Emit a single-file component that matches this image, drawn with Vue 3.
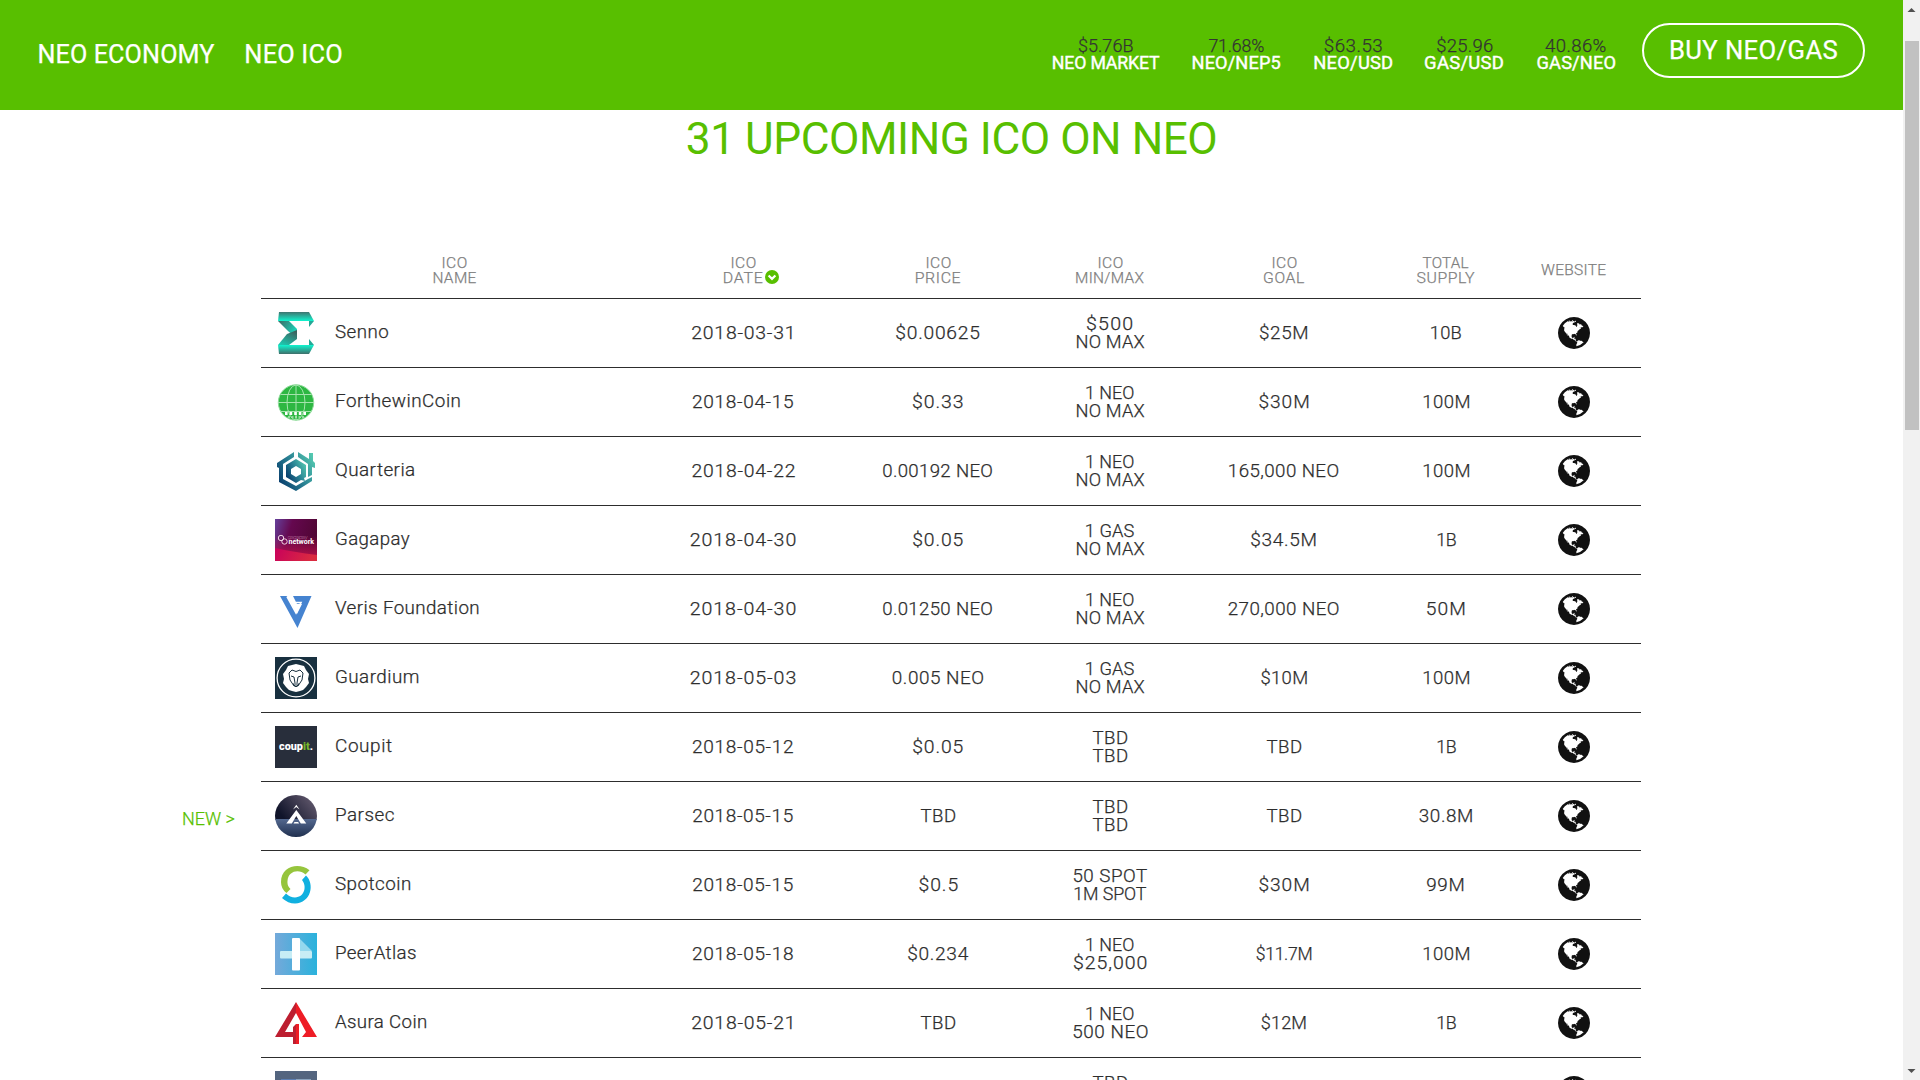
<script setup>
const stats = [
  { value: '$5.76B', vw: 54.5, label: 'NEO MARKET', lw: 107 },
  { value: '71.68%', vw: 55.5, label: 'NEO/NEP5', lw: 88 },
  { value: '$63.53', vw: 57, label: 'NEO/USD', lw: 78 },
  { value: '$25.96', vw: 56, label: 'GAS/USD', lw: 78 },
  { value: '40.86%', vw: 61, label: 'GAS/NEO', lw: 78 },
]

const headers = [
  [['ICO', 24.5], ['NAME', 42.4]],
  [['ICO', 24.5], ['DATE', 38.4]],
  [['ICO', 24.5], ['PRICE', 44.3]],
  [['ICO', 24.5], ['MIN/MAX', 67.6]],
  [['ICO', 24.5], ['GOAL', 40.3]],
  [['TOTAL', 46], ['SUPPLY', 58]],
  [['WEBSITE', 64.5]],
]

const noMax = ['NO MAX', 68]
const oneNeo = ['1 NEO', 48]
const oneGas = ['1 GAS', 48]
const tbd = ['TBD', 35]

const rows = [
  { logo: 'senno', name: ['Senno', 53.7], cells: [[['2018-03-31', 101]], [['$0.00625', 83.5]], [['$500', 45], noMax], [['$25M', 47]], [['10B', 31]]] },
  { logo: 'ftw', name: ['ForthewinCoin', 124], cells: [[['2018-04-15', 101.5]], [['$0.33', 49.5]], [oneNeo, noMax], [['$30M', 48.5]], [['100M', 45.5]]] },
  { logo: 'quarteria', name: ['Quarteria', 78.5], cells: [[['2018-04-22', 104]], [['0.00192 NEO', 109.5]], [oneNeo, noMax], [['165,000 NEO', 110]], [['100M', 45.5]]] },
  { logo: 'gagapay', name: ['Gagapay', 74], cells: [[['2018-04-30', 105.5]], [['$0.05', 50]], [oneGas, noMax], [['$34.5M', 64]], [['1B', 19.5]]] },
  { logo: 'veris', name: ['Veris Foundation', 143.7], cells: [[['2018-04-30', 105.5]], [['0.01250 NEO', 109.5]], [oneNeo, noMax], [['270,000 NEO', 111.5]], [['50M', 37.5]]] },
  { logo: 'guardium', name: ['Guardium', 82.3], cells: [[['2018-05-03', 105.5]], [['0.005 NEO', 91]], [oneGas, noMax], [['$10M', 45]], [['100M', 45.5]]] },
  { logo: 'coupit', name: ['Coupit', 56.3], cells: [[['2018-05-12', 101.5]], [['$0.05', 50]], [tbd, tbd], [tbd], [['1B', 19.5]]] },
  { logo: 'parsec', isNew: true, name: ['Parsec', 58], cells: [[['2018-05-15', 101]], [tbd], [tbd, tbd], [tbd], [['30.8M', 53]]] },
  { logo: 'spotcoin', name: ['Spotcoin', 75.3], cells: [[['2018-05-15', 101]], [['$0.5', 38.5]], [['50 SPOT', 74], ['1M SPOT', 72.5]], [['$30M', 48.5]], [['99M', 37]]] },
  { logo: 'peeratlas', name: ['PeerAtlas', 80.3], cells: [[['2018-05-18', 101.5]], [['$0.234', 60]], [oneNeo, ['$25,000', 72]], [['$11.7M', 54.5]], [['100M', 45.5]]] },
  { logo: 'asura', name: ['Asura Coin', 91.3], cells: [[['2018-05-21', 101]], [tbd], [oneNeo, ['500 NEO', 75]], [['$12M', 43.5]], [['1B', 19.5]]] },
  { logo: 'next', name: ['', 0], cells: [[], [], [tbd, tbd], [], []] },
]

// Makes the ink of a label span the given width: half by widening the glyphs, half by tracking.
const ctx = document.createElement('canvas').getContext('2d')
const vFit = {
  mounted(el, { value }) {
    const text = el.textContent.trim()
    if (text.length < 2 || !value) return
    const cs = getComputedStyle(el)
    ctx.font = `${cs.fontWeight} ${cs.fontSize} ${cs.fontFamily}`
    const m = ctx.measureText(text)
    const ink = m.actualBoundingBoxRight + m.actualBoundingBoxLeft
    const scale = Math.sqrt(value / ink)
    const spacing = (value / scale - ink) / (text.length - 1)
    el.style.letterSpacing = `${spacing.toFixed(3)}px`
    el.style.marginRight = `${(-spacing).toFixed(3)}px`
    el.style.transform = `scaleX(${scale.toFixed(4)})`
  },
}

const globe = 'M896 128q209 0 385.5 103t279.5 279.5 103 385.5-103 385.5-279.5 279.5-385.5 103-385.5-103-279.5-279.5-103-385.5 103-385.5 279.5-279.5 385.5-103zm274 521q-2 1-9.5 9.5t-13.5 9.5q2 0 4.5-5t5-11 3.5-7q6-7 22-15 14-6 52-12 34-8 51 11-2-2 9.5-13t14.5-12q3-2 15-4.5t15-7.5l2-22q-12 1-17.5-7t-6.5-21q0 2-6 8 0-7-4.5-8t-11.5 1-9 1q-10-3-15-7.5t-8-16.5-4-15q-2-5-9.5-11t-9.5-10q-1-2-2.5-5.5t-3-6.5-4-5.5-5.5-2.5-7 5-7.5 10-4.5 5q-3-2-6-1.5t-4.5 1-4.5 3-5 3.5q-3 2-8.5 3t-8.5 2q15-5-1-11-10-4-16-3 9-4 7.5-12t-8.5-14h5q-1-4-8.5-8.5t-17.5-8.5-13-6q-8-5-34-9.5t-33-.5q-5 6-4.5 10.5t4 14 3.5 12.5q1 6-5.5 13t-6.5 12q0 7 14 15.5t10 21.5q-3 8-16 16t-16 12q-5 8-1.5 18.5t10.5 16.5q2 2 1.5 4t-3.5 4.5-5.5 4-6.5 3.5l-3 2q-11 5-20.5-6t-13.5-26q-7-25-16-30-23-8-29 1-5-13-41-26-25-9-58-4 6-1 0-15-7-15-19-12 3-6 4-17.5t1-13.5q3-13 12-23 1-1 7-8.5t9.5-13.5.5-6q35 4 50-11 5-5 11.5-17t10.5-17q9-6 14-5.5t14.5 5.5 14.5 5q14 1 15.5-11t-7.5-20q12 1 3-17-5-7-8-9-12-4-27 5-8 4 2 8-1-1-9.5 10.5t-16.5 17.5-16-5q-1-1-5.5-13.5t-9.5-13.5q-8 0-16 15 3-8-11-15t-24-8q19-12-8-27-7-4-20.5-5t-19.5 4q-5 7-5.5 11.5t5 8 10.5 5.5 11.5 4 8.5 3q14 10 8 14-2 1-8.5 3.5t-11.5 4.5-6 4q-3 4 0 14t-2 14q-5-5-9-17.5t-7-16.5q7 9-25 6l-10-1q-4 0-16 2t-20.5 1-13.5-8q-4-8 0-20 1-4 4-2-4-3-11-9.5t-10-8.5q-46 15-94 41 6 1 12-1 5-2 13-6.5t10-5.5q34-14 42-7l5-5q14 16 20 25-7-4-30-1-20 6-22 12 7 12 5 18-4-3-11.5-10t-14.5-11-15-5q-16 0-22 1-146 80-235 222 7 7 12 8 4 1 5 9t2.5 11 11.5-3q9 8 3 19 1-1 44 27 19 17 21 21 3 11-10 18-1-2-9-9t-9-4q-3 5 .5 18.5t10.5 12.5q-7 0-9.5 16t-2.5 35.5-1 23.5l2 1q-3 12 5.5 34.5t21.5 19.5q-13 3 20 43 6 8 8 9 3 2 12 7.5t15 10 10 10.5q4 5 10 22.5t14 23.5q-2 6 9.5 20t10.5 23q-1 0-2.5 1t-2.5 1q3 7 15.5 14t15.5 13q1 3 2 10t3 11 8 2q2-20-24-62-15-25-17-29-3-5-5.5-15.5t-4.5-14.5q2 0 6 1.5t8.5 3.5 7.5 4 2 3q-3 7 2 17.5t12 18.5 17 19 12 13q6 6 14 19.5t0 13.5q9 0 20 10.5t17 19.5q5 8 8 26t5 24q2 7 8.5 13.5t12.5 9.5l16 8 13 7q5 2 18.5 10.5t21.5 11.5q10 4 16 4t14.5-2.5 13.5-3.5q15-2 29 15t21 21q36 19 55 11-2 1 .5 7.5t8 15.5 9 14.5 5.5 8.5q5 6 18 15t18 15q6-4 7-9-3 8 7 20t18 10q14-3 14-32-31 15-49-18 0-1-2.5-5.5t-4-8.5-2.5-8.5 0-7.5 5-3q9 0 10-3.5t-2-12.5-4-13q-1-8-11-20t-12-15q-5 9-16 8t-16-9q0 1-1.5 5.5t-1.5 6.5q-13 0-15-1 1-3 2.5-17.5t3.5-22.5q1-4 5.5-12t7.5-14.5 4-12.5-4.5-9.5-17.5-2.5q-19 1-26 20-1 3-3 10.5t-5 11.5-9 7q-7 3-24 2t-24-5q-13-8-22.5-29t-9.5-37q0-10 2.5-26.5t3-25-5.5-24.5q3-2 9-9.5t10-10.5q2-1 4.5-1.5t4.5 0 4-1.5 3-6q-1-1-4-3-3-3-4-3 7 3 28.5-1.5t27.5 1.5q15 11 22-2 0-1-2.5-9.5t-.5-13.5q5 27 29 9 3 3 15.5 5t17.5 5q3 2 7 5.5t5.5 4.5 5-.5 8.5-6.5q10 14 12 24 11 40 19 44 7 3 11 2t4.5-9.5 0-14-1.5-12.5l-1-8v-18l-1-8q-15-3-18.5-12t1.5-18.5 15-18.5q1-1 8-3.5t15.5-6.5 12.5-8q21-19 15-35 7 0 11-9-1 0-5-3t-7.5-5-4.5-2q9-5 2-16 5-3 7.5-11t7.5-10q9 12 21 2 8-8 1-16 5-7 20.5-10.5t18.5-9.5q7 2 8-2t1-12 3-12q4-5 15-9t13-5l17-11q3-4 0-4 18 2 31-11 10-11-6-20 3-6-3-9.5t-15-5.5q3-1 11.5-.5t10.5-1.5q15-10-7-16-17-5-43 12zm-163 877q206-36 351-189-3-3-12.5-4.5t-12.5-3.5q-18-7-24-8 1-7-2.5-13t-8-9-12.5-8-11-7q-2-2-7-6t-7-5.5-7.5-4.5-8.5-2-10 1l-3 1q-3 1-5.5 2.5t-5.5 3-4 3 0 2.5q-21-17-36-22-5-1-11-5.5t-10.5-7-10-1.5-11.5 7q-5 5-6 15t-2 13q-7-5 0-17.5t2-18.5q-3-6-10.5-4.5t-12 4.5-11.5 8.5-9 6.5-8.5 5.5-8.5 7.5q-3 4-6 12t-5 11q-2-4-11.5-6.5t-9.5-5.5q2 10 4 35t5 38q7 31-12 48-27 25-29 40-4 22 12 26 0 7-8 20.5t-7 21.5q0 6 2 16z'
</script>

<template>
  <div class="page">
    <div class="content">
      <header class="bar">
        <nav class="nav">
          <a><span v-fit="175">NEO ECONOMY</span></a>
          <a><span v-fit="95">NEO ICO</span></a>
        </nav>
        <div class="stats">
          <div v-for="s in stats" :key="s.label" class="stat" :style="{ width: s.lw + 2 + 'px' }">
            <span v-fit="s.vw" class="value">{{ s.value }}</span>
            <span v-fit="s.lw" class="label">{{ s.label }}</span>
          </div>
        </div>
        <a class="buy"><span v-fit="166">BUY NEO/GAS</span></a>
      </header>

      <h1><span v-fit="528">31 UPCOMING ICO ON NEO</span></h1>

      <main class="table">
        <div class="row head">
          <div v-for="(h, i) in headers" :key="i" class="cell">
            <div v-for="line in h" :key="line[0]" class="line">
              <span v-fit="line[1]">{{ line[0] }}</span>
              <svg v-if="line[0] === 'DATE'" class="sort" viewBox="0 0 14 14">
                <circle cx="7" cy="7" r="7" fill="#58bf00" />
                <path d="M3.6 5.5 7 8.9l3.4-3.4" fill="none" stroke="#fff" stroke-width="2.2" />
              </svg>
            </div>
          </div>
        </div>

        <div v-for="r in rows" :key="r.logo" class="row">
          <span v-if="r.isNew" class="new"><span v-fit="51.5">NEW &gt;</span></span>
          <div class="name">
            <svg v-if="r.logo === 'senno'" class="logo" viewBox="0 0 42 42">
              <defs>
                <linearGradient id="se1" x2="0" y2="1"><stop offset="0" stop-color="#3f7570" /><stop offset="1" stop-color="#10f5cf" /></linearGradient>
                <linearGradient id="se2" x2="0" y2="1"><stop offset="0" stop-color="#10f5cf" /><stop offset="1" stop-color="#3f6f6b" /></linearGradient>
                <linearGradient id="se3" x2="1" y2=".6"><stop offset="0" stop-color="#3d6863" /><stop offset="1" stop-color="#18dcc0" /></linearGradient>
                <linearGradient id="se4" x1=".8" y1="0" x2=".2" y2="1"><stop offset="0" stop-color="#3d5f5c" /><stop offset="1" stop-color="#1cc9b0" /></linearGradient>
              </defs>
              <path d="M3 9h11l8 8v10L13 19z" fill="url(#se3)" />
              <path d="M22 18v9l-8 6H3l9-11z" fill="url(#se4)" />
              <path d="M4 0h30l5 9H3z" fill="url(#se1)" />
              <path d="M3 33h36l-5 9H4z" fill="url(#se2)" />
              <path d="M34 9h5l-5 6zM34 27l5 6h-5z" fill="#25a897" />
            </svg>

            <svg v-else-if="r.logo === 'ftw'" class="logo" viewBox="0 0 42 42">
              <circle cx="21" cy="21.500" r="17.700" fill="#2db742" stroke="#8ddb98" />
              <g fill="none" stroke="#a5e3ad" stroke-width="1">
                <path d="M21 4v35M3 21.500h36M6 13.500h30M5 30.500h32" />
                <ellipse cx="21" cy="21.500" rx="9" ry="17.500" />
              </g>
              <path d="M10 32.500h23" stroke="#fff" stroke-width="3" stroke-dasharray="2.600 2" />
              <path d="M13 36h17" stroke="#b5e8bb" stroke-width="1.500" stroke-dasharray="2 1.500" />
            </svg>

            <svg v-else-if="r.logo === 'quarteria'" class="logo" viewBox="0 0 42 42">
              <defs><linearGradient id="qu" x1="0" y1=".8" x2="1" y2=".2"><stop offset="0" stop-color="#06386a" /><stop offset=".5" stop-color="#287f92" /><stop offset="1" stop-color="#54c8b0" /></linearGradient></defs>
              <path d="M19 2v5L8 14v15l13 7 12-7 4-2v4l-16 10L4 32V18l-2-1v-4zM23 2l11 7V3h4v8l2 2v5l-3-1v8l-4 2V14L23 7z" fill="url(#qu)" />
              <path fill-rule="evenodd" d="M21 9l10 6v12l-2 1 1 3-4-1-5 3-10-6V15zM21 16l-5 3v5l5 3 5-3v-5z" fill="url(#qu)" />
            </svg>

            <svg v-else-if="r.logo === 'gagapay'" class="logo" viewBox="0 0 42 42">
              <defs>
                <linearGradient id="ga" x1="0" x2="1" y1="0" y2=".3"><stop offset="0" stop-color="#65409b" /><stop offset=".4" stop-color="#65084f" /><stop offset="1" stop-color="#500634" /></linearGradient>
                <linearGradient id="gb" x1="0" x2="1" y2=".2"><stop offset="0" stop-color="#c8005c" /><stop offset="1" stop-color="#da2b40" /></linearGradient>
                <linearGradient id="gc" x2="0" y2="1"><stop offset="0" stop-color="#c0104f" stop-opacity="0" /><stop offset="1" stop-color="#c8104a" /></linearGradient>
              </defs>
              <path d="M0 0h42v42H0z" fill="url(#ga)" />
              <path d="M0 17h42v25H0z" fill="url(#gc)" />
              <path d="M0 29q18 4 42 7v6H0z" fill="url(#gb)" />
              <g fill="none" stroke="#efd4e2" stroke-width="1"><circle cx="6" cy="19" r="2.700" /><circle cx="9.500" cy="22.500" r="2.700" /></g>
              <text x="12.500" y="20" font-size="6" textLength="20" fill="#b06d98">gagapay</text>
              <text x="13.500" y="24.800" font-size="6.500" font-weight="700" textLength="25.500" lengthAdjust="spacingAndGlyphs" fill="#fff">network</text>
            </svg>

            <svg v-else-if="r.logo === 'veris'" class="logo" viewBox="0 0 42 42">
              <path d="M5 8h7l10 18 5-10h-5l-4-8h18.500L22.500 40z" fill="#4583d0" />
              <path d="M12 8.500l9 16.500 5-10.500h-5" fill="none" stroke="#fff" stroke-width="1.600" />
            </svg>

            <svg v-else-if="r.logo === 'guardium'" class="logo" viewBox="0 0 42 42">
              <path d="M0 0h42v42H0z" fill="#18303f" />
              <circle cx="21" cy="21" r="18.900" fill="none" stroke="#fff" stroke-width="1.300" />
              <path d="M21 7l4 1 4 1 2 4 3 4-1 5 1 4-3 4-3 3-3 1-4 1-4-1-3-1-3-3-3-4 1-4-1-5 3-4 2-4 4-1z" fill="#fff" />
              <path d="M21 14.500l-4-1.500-3 3 1 7 4 6h4l4-6 1-7-3-3zM16 19l3 1 1 6M26 19l-3 1-1 6M18 27h6l-3 3z" fill="none" stroke="#18303f" stroke-width="1" />
            </svg>

            <svg v-else-if="r.logo === 'coupit'" class="logo" viewBox="0 0 42 42">
              <path d="M0 0h42v42H0z" fill="#282e3b" />
              <text x="4" y="23.500" font-size="10" font-weight="900" textLength="34" lengthAdjust="spacingAndGlyphs" fill="#fff">coup<tspan fill="#76b82a">it</tspan>.</text>
            </svg>

            <svg v-else-if="r.logo === 'parsec'" class="logo" viewBox="0 0 42 42">
              <defs>
                <clipPath id="pc"><circle cx="21" cy="21" r="21" /></clipPath>
                <linearGradient id="pa" x1="0" y1=".5" x2="1" y2="0"><stop offset="0" stop-color="#10142a" /><stop offset="1" stop-color="#6d6276" /></linearGradient>
                <linearGradient id="pb" x2="0" y2="1"><stop offset="0" stop-color="#53688f" /><stop offset="1" stop-color="#20304f" /></linearGradient>
              </defs>
              <g clip-path="url(#pc)"><path d="M0 0h42v25H0z" fill="url(#pa)" /><path d="M0 24h42v18H0z" fill="url(#pb)" /></g>
              <path d="M21.300 15l10 13.500h-5.500L21.300 21l-4.500 7.500h-5.500zM18.500 28.500l1-1.500h3.600l1 1.500zM18 14.500l3.300-4.700 3.300 4.700-3.300-2.500z" fill="#fff" />
            </svg>

            <svg v-else-if="r.logo === 'spotcoin'" class="logo" viewBox="0 0 42 42">
              <path d="M34.500 6.300C24-2 6 2 6 18q0 7 5.500 11l4-4Q12 22 12.500 17C13 7 24 4.500 30.500 10.500z" fill="#96c53d" />
              <path d="M31 11.500C40 20 36 39 20 39.500q-7 0-13-5.500l4-4.500q4 4 9 4C30 33 32 22 27 16z" fill="#10b0e0" />
            </svg>

            <svg v-else-if="r.logo === 'peeratlas'" class="logo" viewBox="0 0 42 42">
              <defs><linearGradient id="pe"><stop offset="0" stop-color="#74a9da" /><stop offset="1" stop-color="#2ab2dc" /></linearGradient></defs>
              <path d="M0 0h42v42H0z" fill="url(#pe)" />
              <path d="M25 6l12 12H25z" fill="#94d8ee" />
              <rect x="5" y="18" width="32" height="7.500" rx="1" fill="#c7edf5" />
              <rect x="17" y="5" width="8" height="32.500" rx="1" fill="#fff" />
            </svg>

            <svg v-else-if="r.logo === 'asura'" class="logo" viewBox="0 0 42 42">
              <path d="M21 0v11L10 30h8v-5l3-3v20h-3v-7H0z" fill="#bd1e30" />
              <path d="M21 0l21 35H27l4-5L21 11zM21 22h3v20h-3z" fill="#ee1c25" />
            </svg>

            <svg v-else class="logo" viewBox="0 0 42 42">
              <path d="M0 0h42v42H0z" fill="#54657f" />
              <path d="M6 8h15v28H6z" fill="#5c7fb4" /><path d="M21 8h15v28H21z" fill="#8ba4bf" />
            </svg>
            <span v-fit="r.name[1]">{{ r.name[0] }}</span>
          </div>
          <div v-for="(c, i) in r.cells" :key="i" class="cell">
            <div v-for="(line, j) in c" :key="j" class="line"><span v-fit="line[1]">{{ line[0] }}</span></div>
          </div>
          <div class="cell">
            <svg class="globe" viewBox="128 128 1536 1536"><path :d="globe" fill="#111" /></svg>
          </div>
        </div>
      </main>
    </div>

    <aside class="scrollbar">
      <svg class="arrow" viewBox="0 0 17 17"><path d="M4.500 12h8L8.500 8z" fill="#505050" /></svg>
      <div class="thumb"></div>
      <svg class="arrow" viewBox="0 0 17 17"><path d="M4.500 6h8l-4 4z" fill="#505050" /></svg>
    </aside>
  </div>
</template>

<style>
body {
  margin: 0;
  overflow: hidden;
}
</style>

<style scoped>
.page {
  display: flex;
  width: 1920px;
  height: 1080px;
  overflow: hidden;
  background: #fff;
  color: #2d2d2d;
  font: 300 18px/18px Roboto, "Liberation Sans", sans-serif;
  white-space: nowrap;
  -webkit-text-stroke: 0.25px currentColor;
}
.logo text {
  -webkit-text-stroke: 0;
}
.content {
  width: 1903px;
  height: 1080px;
  overflow: hidden;
}
.bar {
  box-sizing: border-box;
  display: flex;
  align-items: flex-start;
  height: 110px;
  padding: 23px 38px 0 37px;
  background: #58bf00;
  color: #fff;
}
.nav {
  display: flex;
  gap: 31px;
  margin: 18px 0 0 1px;
  font-size: 25px;
  font-weight: 400;
  line-height: 27px;
}
.nav span {
  display: inline-block;
}
.stats {
  display: flex;
  gap: 31.5px;
  margin: 14px 26px 0 auto;
}
.stat {
  display: flex;
  flex-direction: column;
  align-items: center;
}
.value {
  color: #333;
}
.label {
  font-weight: 400;
  line-height: 16px;
  -webkit-text-stroke-width: 0.4px;
}
.buy {
  box-sizing: border-box;
  display: flex;
  justify-content: center;
  width: 223px;
  height: 55px;
  padding-top: 11px;
  border: 2px solid #fff;
  border-radius: 28px;
  font-size: 25px;
  font-weight: 400;
  line-height: 29px;
}
h1 {
  margin: 6px 0 0;
  color: #58bf00;
  font-size: 45px;
  font-weight: 400;
  line-height: 45px;
  text-align: center;
  -webkit-text-stroke-width: 0;
}
h1 span {
  display: inline-block;
}
.table {
  width: 1380px;
  margin: 81px 0 0 261px;
}
.row {
  position: relative;
  box-sizing: border-box;
  display: grid;
  grid-template-columns: 386.5px 191px 199px 145px 203px 121px 134.5px;
  height: 69px;
  border-bottom: 1px solid #2d2d2d;
}
.head {
  height: 57px;
  color: #808080;
  font-size: 15px;
  line-height: 15px;
}
.cell {
  display: flex;
  flex-direction: column;
  align-items: center;
  justify-content: center;
}
.line {
  position: relative;
  display: flex;
}
.head .line:not(:only-child) {
  top: 1px;
}
.sort {
  position: absolute;
  top: -1px;
  left: calc(100% + 3px);
  width: 14px;
  height: 14px;
}
.name {
  display: flex;
  align-items: center;
  padding-left: 14px;
}
.name > span {
  padding-bottom: 2px;
  transform-origin: 0 50%;
}
.logo {
  width: 42px;
  height: 42px;
  margin-right: 18px;
}
.globe {
  width: 32px;
  height: 32px;
}
.new {
  position: absolute;
  top: 28px;
  left: -79px;
  color: #58bf00;
}
.new span {
  display: inline-block;
}
.scrollbar {
  display: flex;
  flex-direction: column;
  width: 17px;
  height: 1080px;
  background: #f1f1f1;
}
.arrow {
  width: 17px;
  height: 17px;
}
.thumb {
  height: 389px;
  margin: 24px 1px auto 2px;
  background: #c1c1c1;
}
</style>
